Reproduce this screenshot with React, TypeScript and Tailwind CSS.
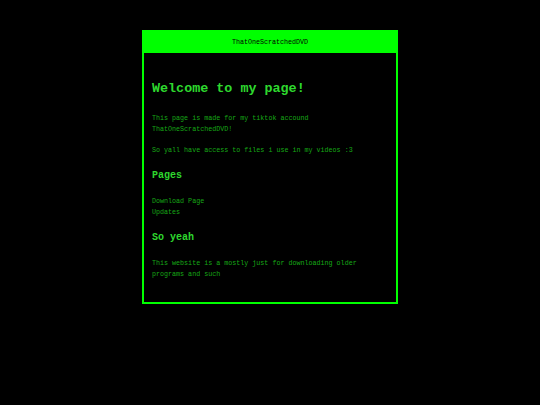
import React from "react";

export default function App() {
  return (
    <div
      className="w-[540px] h-[405px] bg-black overflow-hidden pt-[30px]"
      style={{ fontFamily: '"Liberation Mono", "Courier New", monospace' }}
    >
      <div className="w-[256px] mx-auto border-2 border-[#00ff00]">
        <div className="h-[21px] bg-[#00ff00] flex items-center justify-center text-[6.7px] text-black leading-none">
          ThatOneScratchedDVD
        </div>
        <div className="px-[8px] pt-[28px] pb-[22px]">
          <h1 className="text-[13.4px] leading-[16px] font-bold text-[#2ed82e]">
            Welcome to my page!
          </h1>
          <p className="mt-[16px] text-[6.7px] leading-[11px] text-[#16a816]">
            This page is made for my tiktok accound ThatOneScratchedDVD!
          </p>
          <p className="mt-[10px] text-[6.7px] leading-[11px] text-[#16a816]">
            So yall have access to files i use in my videos :3
          </p>
          <h2 className="mt-[14px] text-[10px] leading-[12px] font-bold text-[#2ed82e]">
            Pages
          </h2>
          <div className="mt-[14px] text-[6.7px] leading-[11px] text-[#16a816] flex flex-col">
            <span>Download Page</span>
            <span>Updates</span>
          </div>
          <h2 className="mt-[14px] text-[10px] leading-[12px] font-bold text-[#2ed82e]">
            So yeah
          </h2>
          <p className="mt-[14px] text-[6.7px] leading-[11px] text-[#16a816]">
            This website is a mostly just for downloading older programs and such
          </p>
        </div>
      </div>
    </div>
  );
}
